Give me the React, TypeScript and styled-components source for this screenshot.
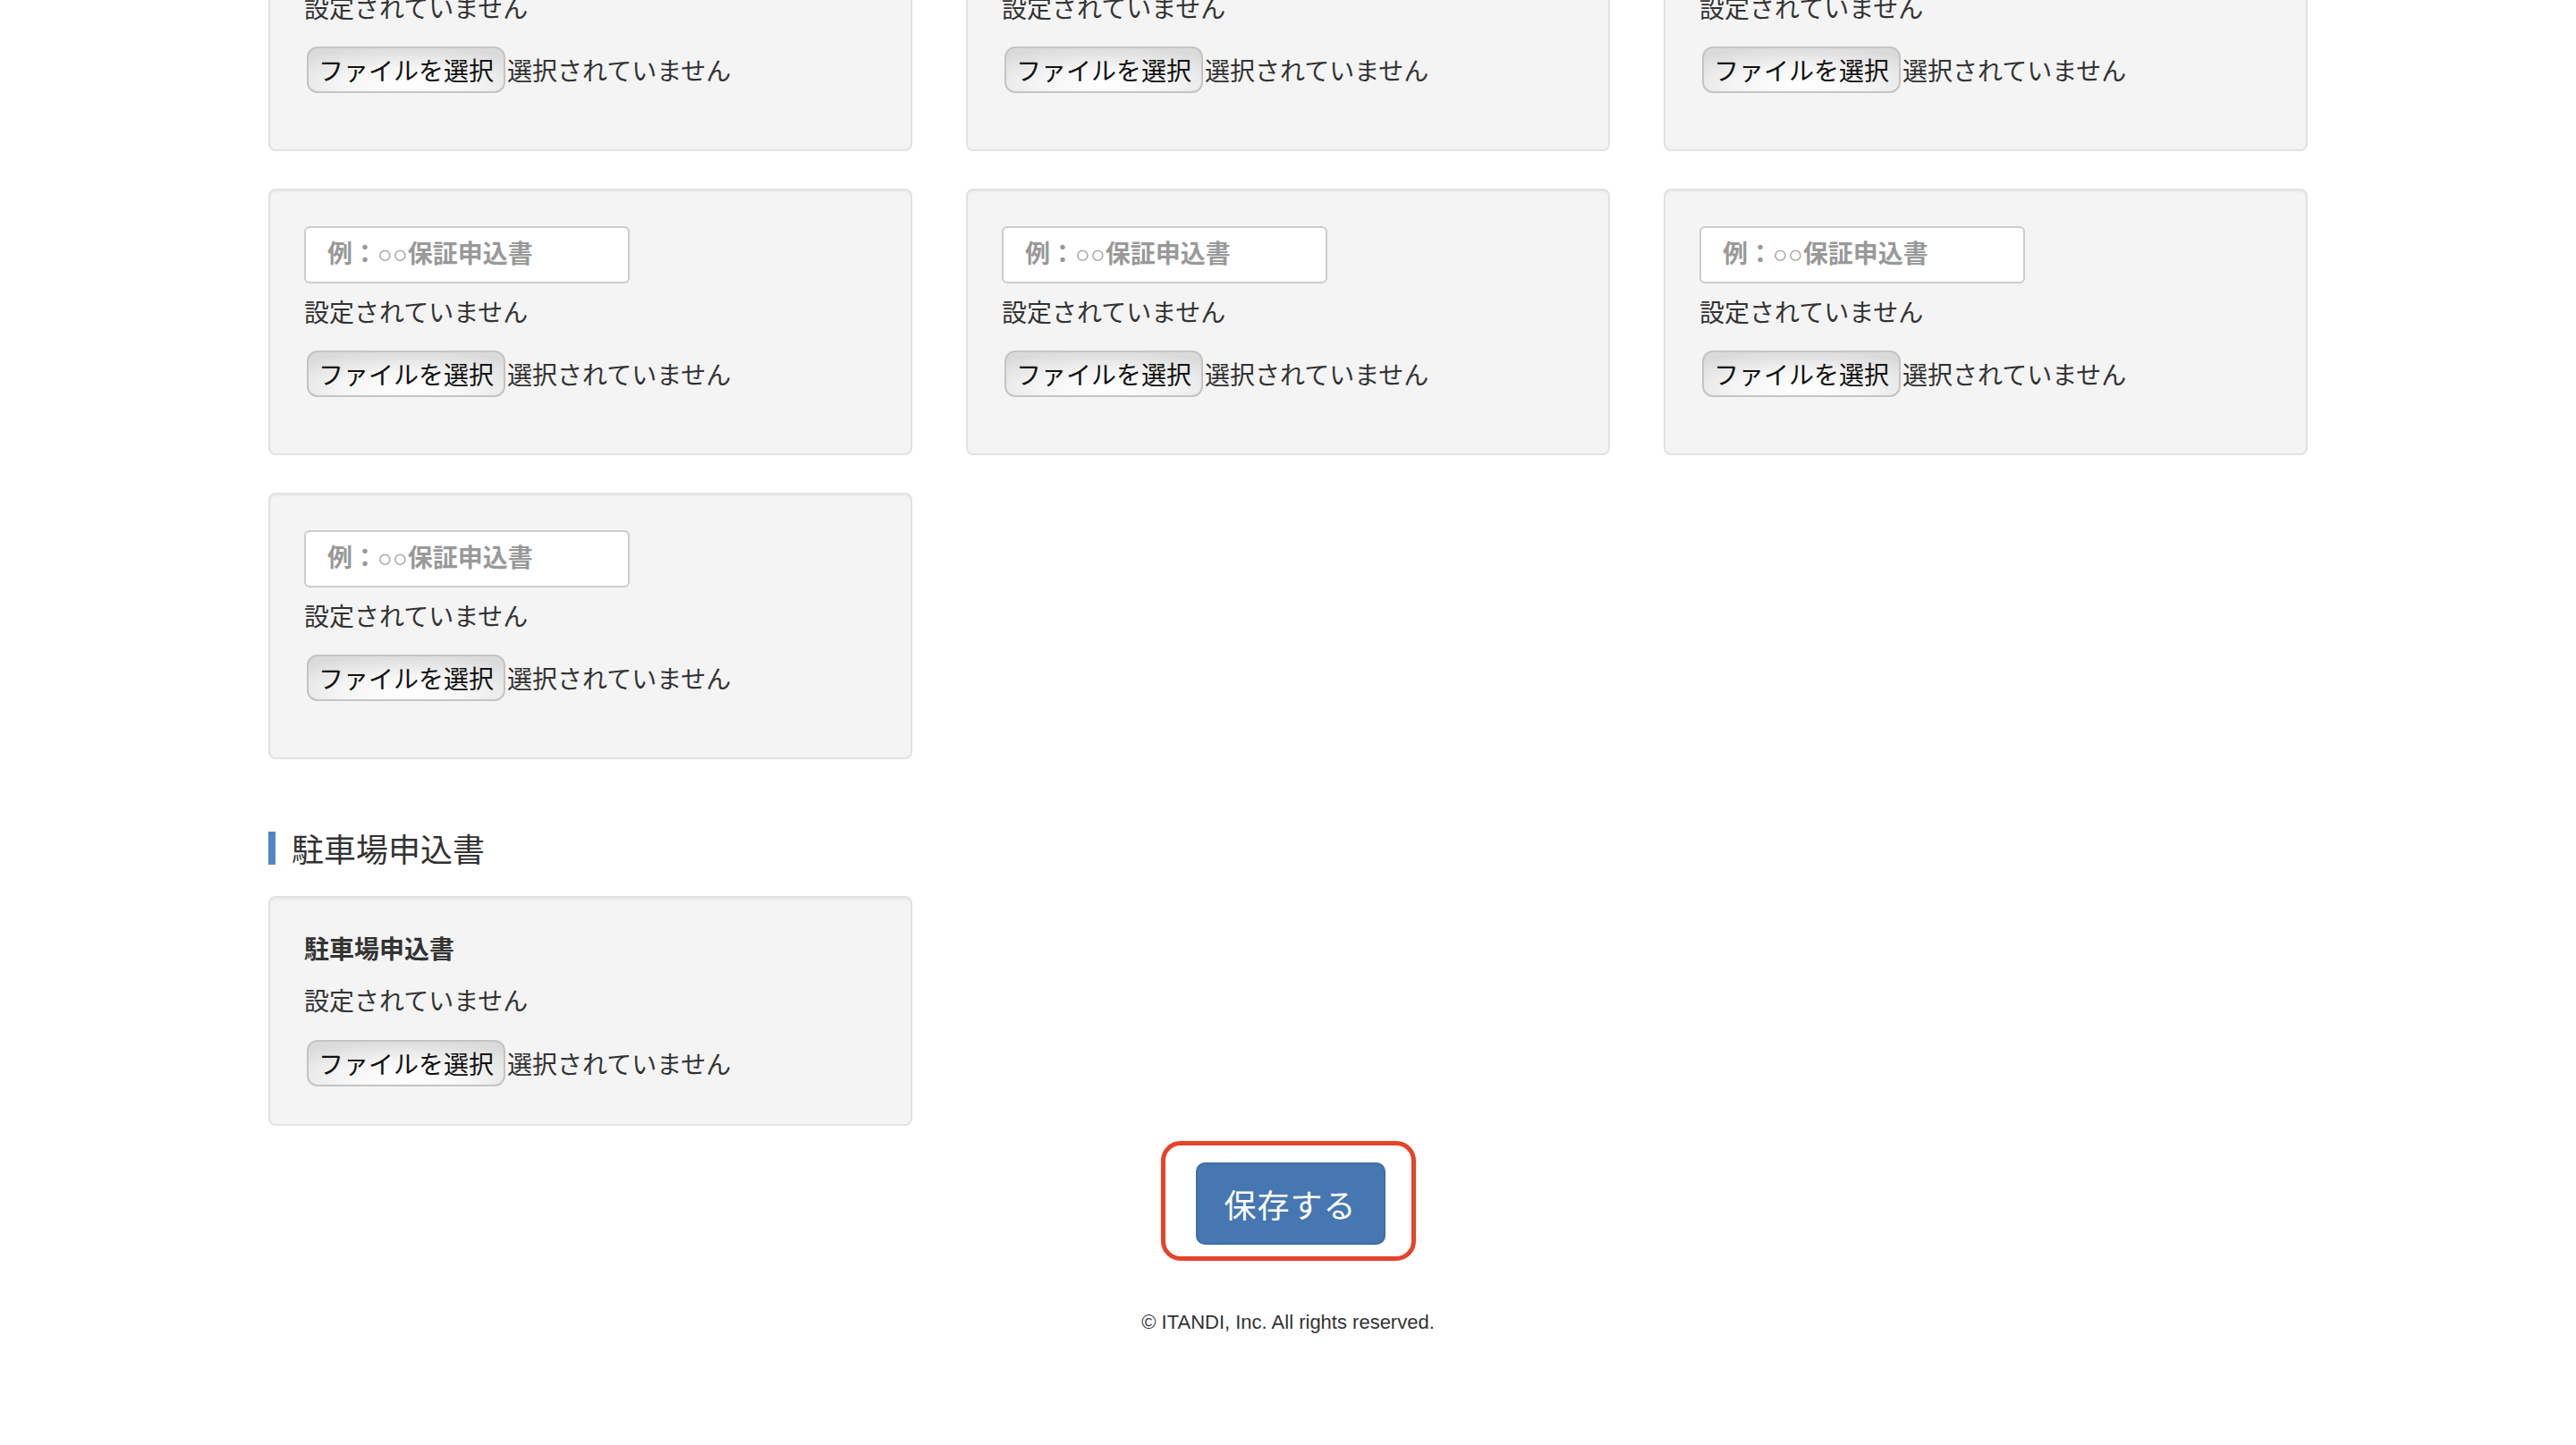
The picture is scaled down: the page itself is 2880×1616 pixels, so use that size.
import React from 'react';
import styled, { createGlobalStyle } from 'styled-components';

const GlobalStyle = createGlobalStyle`
  html, body {
    margin: 0;
    padding: 0;
    background: #fff;
    overflow: hidden;
  }
  body {
    font-family: "Noto Sans CJK JP", "Noto Sans", sans-serif;
    color: #333;
  }
`;

const Page = styled.div`
  width: 2280px;
  margin: -129px auto 0;
`;

const CardGrid = styled.div`
  display: grid;
  grid-template-columns: repeat(3, 720px);
  column-gap: 60px;
  row-gap: 42px;
`;

const Well = styled.div<{ $tail?: number }>`
  box-sizing: border-box;
  background: #f4f4f4;
  border: 2px solid #e2e2e2;
  border-radius: 8px;
  box-shadow: inset 0 2px 2px rgba(0, 0, 0, 0.04);
  padding: 40px 38px ${(p) => 40 + (p.$tail ?? 0)}px;
  display: flex;
  flex-direction: column;
  align-items: flex-start;
`;

const NameInput = styled.input`
  box-sizing: border-box;
  width: 364px;
  height: 64px;
  border: 2px solid #cccccc;
  border-radius: 6px;
  background: #fff;
  padding: 0 24px;
  font-family: "Liberation Sans", "Noto Sans CJK JP", sans-serif;
  font-size: 28px;
  font-weight: 700;
  outline: none;
  &::placeholder {
    color: #999;
    font-weight: 700;
  }
`;

const Label = styled.div`
  font-size: 28px;
  font-weight: 700;
  line-height: 32px;
  color: #333;
`;

const Status = styled.div<{ $gap: number }>`
  margin-top: ${(p) => p.$gap}px;
  font-size: 28px;
  line-height: 40px;
  color: #333;
`;

const FileRow = styled.div<{ $gap: number }>`
  margin-top: ${(p) => p.$gap}px;
  display: flex;
  align-items: center;
  height: 52px;
  padding-left: 3px;
`;

const FileButton = styled.button`
  box-sizing: border-box;
  height: 52px;
  padding: 0 11px;
  border: 2px solid #c4c4c4;
  border-radius: 12px;
  background: radial-gradient(ellipse 75% 90% at 50% 85%, #ffffff 0%, #f5f5f5 45%, #dadada 100%);
  font-family: "Noto Sans CJK JP", sans-serif;
  font-size: 28px;
  color: #111;
  line-height: 1;
`;

const FileState = styled.span`
  margin-left: 2px;
  font-size: 28px;
  color: #333;
`;

const SectionTitle = styled.h3`
  margin: 81px 0 35px;
  border-left: 8px solid #4f86c9;
  padding-left: 18px;
  height: 37px;
  font-size: 36px;
  font-weight: 400;
  line-height: 37px;
  color: #333;
`;

const SaveArea = styled.div`
  display: flex;
  justify-content: center;
  margin-top: 17px;
`;

const Highlight = styled.div`
  border: 5px solid #e5432a;
  border-radius: 22px;
  padding: 19px 29px 13px 34px;
`;

const SaveButton = styled.button`
  width: 212px;
  height: 92px;
  border: 2px solid #3f6ea6;
  border-radius: 10px;
  background: #4677b0;
  color: #fff;
  font-family: "Noto Sans CJK JP", sans-serif;
  font-size: 36px;
  letter-spacing: 1px;
`;

const Footer = styled.div`
  margin-top: 54px;
  text-align: center;
  font-family: "Liberation Sans", Arial, sans-serif;
  font-size: 22px;
  line-height: 30px;
  color: #333;
`;

function FilePicker({ gap }: { gap: number }) {
  return (
    <FileRow $gap={gap}>
      <FileButton>ファイルを選択</FileButton>
      <FileState>選択されていません</FileState>
    </FileRow>
  );
}

function DocCard() {
  return (
    <Well $tail={23}>
      <NameInput placeholder="例：○○保証申込書" />
      <Status $gap={11}>設定されていません</Status>
      <FilePicker gap={24} />
    </Well>
  );
}

export default function App() {
  const cards = Array.from({ length: 7 });
  return (
    <>
      <GlobalStyle />
      <Page>
        <CardGrid>
          {cards.map((_, i) => (
            <DocCard key={i} />
          ))}
        </CardGrid>

        <SectionTitle>駐車場申込書</SectionTitle>
        <CardGrid>
          <Well $tail={2}>
            <Label>駐車場申込書</Label>
            <Status $gap={22}>設定されていません</Status>
            <FilePicker gap={25} />
          </Well>
        </CardGrid>

        <SaveArea>
          <Highlight>
            <SaveButton>保存する</SaveButton>
          </Highlight>
        </SaveArea>
        <Footer>© ITANDI, Inc. All rights reserved.</Footer>
      </Page>
    </>
  );
}
